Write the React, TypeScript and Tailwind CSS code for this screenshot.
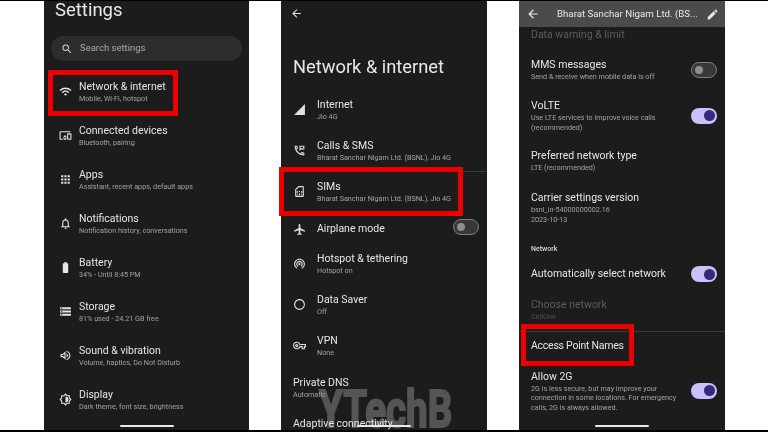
import type { ReactNode } from "react";
import {
  MdAirplanemodeActive,
  MdApps,
  MdArrowBack,
  MdBatteryStd,
  MdEdit,
  MdOutlineBrightness6,
  MdOutlineDevicesOther,
  MdOutlineNotifications,
  MdOutlinePermPhoneMsg,
  MdOutlineSimCard,
  MdOutlineVolumeUp,
  MdOutlineVpnKey,
  MdOutlineWifiTethering,
  MdPanoramaFishEye,
  MdSearch,
  MdSignalCellular4Bar,
  MdStorage,
  MdWifi,
} from "react-icons/md";

function Title({ children, dim, className = "" }: { children: ReactNode; dim?: boolean; className?: string }) {
  return (
    <div className={`text-[10.5px] leading-[14px] whitespace-nowrap ${dim ? "text-[#5c5c5c]" : "text-[#e6e6e6]"} ${className}`}>
      {children}
    </div>
  );
}

function Sub({ children, dim }: { children: ReactNode; dim?: boolean }) {
  return (
    <div className={`text-[7.2px] leading-[9.5px] whitespace-nowrap ${dim ? "text-[#555555]" : "text-[#a3a3a3]"}`}>{children}</div>
  );
}

function Toggle({ on }: { on?: boolean }) {
  if (on) {
    return (
      <div className="w-[26px] h-[16px] -my-px rounded-full bg-[#c9c1fb] flex items-center justify-end pr-[2px] shrink-0">
        <div className="size-[11px] rounded-full bg-[#35297c]" />
      </div>
    );
  }
  return (
    <div className="w-[26px] h-[16px] -my-px rounded-full border border-[#7d7d7d] bg-[#383838] flex items-center pl-[3px] shrink-0">
      <div className="size-[8px] rounded-full bg-[#8e8e8e]" />
    </div>
  );
}

function HomeBar() {
  return <div className="absolute z-20 bottom-[3px] left-1/2 -translate-x-1/2 w-[54px] h-[2px] bg-[#e8e8e8] rounded-full" />;
}

const settingsRows = [
  { icon: <MdWifi />, title: "Network & internet", sub: "Mobile, Wi-Fi, hotspot" },
  { icon: <MdOutlineDevicesOther />, title: "Connected devices", sub: "Bluetooth, pairing" },
  { icon: <MdApps />, title: "Apps", sub: "Assistant, recent apps, default apps" },
  { icon: <MdOutlineNotifications />, title: "Notifications", sub: "Notification history, conversations" },
  { icon: <MdBatteryStd />, title: "Battery", sub: "34% - Until 8:45 PM" },
  { icon: <MdStorage />, title: "Storage", sub: "81% used - 24.21 GB free" },
  { icon: <MdOutlineVolumeUp />, title: "Sound & vibration", sub: "Volume, haptics, Do Not Disturb" },
  { icon: <MdOutlineBrightness6 />, title: "Display", sub: "Dark theme, font size, brightness" },
];

function SettingsPanel() {
  return (
    <div className="relative w-[205px] bg-[#1c1c1c] shrink-0">
      <div className="pl-[11px] text-[18.5px] leading-[19px] text-[#e8e8e8]">Settings</div>
      <div className="mx-[7px] mt-[16px] h-[25px] rounded-full bg-[#2d2d2d] flex items-center text-[#a8a8a8]">
        <MdSearch className="ml-[10px] text-[12px] text-[#d0d0d0]" />
        <span className="ml-[7px] text-[9.5px]">Search settings</span>
      </div>
      <div className="mt-[19px]">
        {settingsRows.map((row) => (
          <div key={row.title} className="h-[44px] flex">
            <div className="w-[14px] ml-[14px] mr-[7px] h-[23.5px] flex items-center justify-center text-[13px] text-[#e6e6e6]">
              {row.icon}
            </div>
            <div>
              <Title>{row.title}</Title>
              <Sub>{row.sub}</Sub>
            </div>
          </div>
        ))}
      </div>
      <div className="absolute left-[4px] top-[69px] w-[130px] h-[46px] border-[5px] border-[#ec0000]" />
      <HomeBar />
    </div>
  );
}

const bsnl = "Bharat Sanchar Nigam Ltd. (BSNL), Jio 4G";

const networkRows = [
  { icon: <MdSignalCellular4Bar />, title: "Internet", sub: "Jio 4G", row: "h-[41px]" },
  { icon: <MdOutlinePermPhoneMsg />, title: "Calls & SMS", sub: bsnl, row: "h-[41px]" },
  { icon: <MdOutlineSimCard />, title: "SIMs", sub: bsnl, row: "h-[41px]" },
];

const networkRowsLower = [
  { icon: <MdOutlineWifiTethering />, title: "Hotspot & tethering", sub: "Hotspot on", row: "h-[41px]" },
  { icon: <MdPanoramaFishEye />, title: "Data Saver", sub: "Off", row: "h-[41px]" },
  { icon: <MdOutlineVpnKey />, title: "VPN", sub: "None", row: "h-[42px]" },
];

function NetworkRow({ icon, title, sub, row }: { icon: ReactNode; title: string; sub: string; row: string }) {
  return (
    <div className={`${row} flex`}>
      <div className="w-[14px] ml-[11px] mr-[11px] h-[23.5px] flex items-center justify-center text-[13px] text-[#e0e0e0]">
        {icon}
      </div>
      <div>
        <Title>{title}</Title>
        <Sub>{sub}</Sub>
      </div>
    </div>
  );
}

function NetworkPanel() {
  return (
    <div className="relative w-[206px] bg-[#1c1c1c] shrink-0">
      <div className="h-[24px] pl-[9px] flex items-center text-[13px] text-[#dddddd]">
        <MdArrowBack />
      </div>
      <div className="mt-[30px] pl-[12px] text-[18.3px] leading-[24px] text-[#e8e8e8]">Network &amp; internet</div>
      <div className="mt-[19px]">
        {networkRows.map((row) => (
          <NetworkRow key={row.title} {...row} />
        ))}
        <div className="h-[31px] pt-px flex">
          <div className="w-[14px] ml-[11px] mr-[11px] h-[14px] flex items-center justify-center text-[13px] text-[#e0e0e0]">
            <MdAirplanemodeActive />
          </div>
          <Title>Airplane mode</Title>
          <div className="absolute right-[8px] top-[219px]">
            <Toggle />
          </div>
        </div>
        {networkRowsLower.map((row) => (
          <NetworkRow key={row.title} {...row} />
        ))}
        <div className="relative z-10 h-[41px] pl-[12px]">
          <Title>Private DNS</Title>
          <Sub>Automatic</Sub>
        </div>
        <div className="relative z-10 pl-[12px]">
          <Title>Adaptive connectivity</Title>
        </div>
      </div>
      <div className="absolute left-0 right-0 top-[170px] h-px bg-[#3a3a3a]" />
      <div className="absolute left-[38px] top-[383px] text-[52px] leading-[52px] font-bold text-[#555555] [-webkit-text-stroke:2px_#555555] origin-left scale-x-[0.74] whitespace-nowrap">
        YTechB
      </div>
      <div className="absolute left-[-2px] top-[166px] w-[184px] h-[49px] border-[5px] border-[#ec0000]" />
      <HomeBar />
    </div>
  );
}

function SimRow({ className, children, on }: { className: string; children: ReactNode; on?: boolean }) {
  return (
    <div className={`${className} flex items-center pl-[12px] pr-[8px]`}>
      <div className="flex-1 min-w-0">{children}</div>
      {on !== undefined && <Toggle on={on} />}
    </div>
  );
}

function SimPanel() {
  return (
    <div className="relative w-[206px] bg-[#1c1c1c] shrink-0">
      <div className="h-[26px] bg-[#4b4b4b] flex items-center text-[#e8e8e8]">
        <MdArrowBack className="ml-[7px] text-[14px]" />
        <span className="ml-[17px] flex-1 text-[9.7px] whitespace-nowrap">Bharat Sanchar Nigam Ltd. (BS...</span>
        <MdEdit className="mr-[6px] text-[13px]" />
      </div>
      <SimRow className="mt-px h-[14px]">
        <Title dim>Data warning &amp; limit</Title>
      </SimRow>
      <SimRow className="mt-[16px]" on={false}>
        <Title>MMS messages</Title>
        <Sub>Send &amp; receive when mobile data is off</Sub>
      </SimRow>
      <SimRow className="mt-[17.5px]" on>
        <Title>VoLTE</Title>
        <Sub>
          Use LTE services to improve voice calls
          <br />
          (recommended)
        </Sub>
      </SimRow>
      <SimRow className="mt-[17px]">
        <Title>Preferred network type</Title>
        <Sub>LTE (recommended)</Sub>
      </SimRow>
      <SimRow className="mt-[18.5px]">
        <Title>Carrier settings version</Title>
        <Sub>
          bsnl_in-54000000002.16
          <br />
          2023-10-13
        </Sub>
      </SimRow>
      <div className="mt-[20.5px] pl-[12px] text-[7px] leading-[9px] font-medium text-[#d8d8d8]">Network</div>
      <SimRow className="mt-[13.5px]" on>
        <Title>Automatically select network</Title>
      </SimRow>
      <SimRow className="mt-[17px]">
        <Title dim>Choose network</Title>
        <Sub dim>CellOne</Sub>
      </SimRow>
      <div className="mt-[9.5px] h-px bg-[#3a3a3a]" />
      <SimRow className="mt-[6.5px]">
        <Title className="tracking-[-0.25px]">Access Point Names</Title>
      </SimRow>
      <SimRow className="mt-[17px]" on>
        <Title>Allow 2G</Title>
        <Sub>
          2G is less secure, but may improve your
          <br />
          connection in some locations. For emergency
          <br />
          calls, 2G is always allowed.
        </Sub>
      </SimRow>
      <div className="absolute left-[2px] top-[323px] w-[113px] h-[42px] border-[5px] border-[#ec0000]" />
      <HomeBar />
    </div>
  );
}

export default function App() {
  return (
    <div className="w-[768px] h-[432px] overflow-hidden bg-white border-t border-b-2 border-black flex gap-[32px] pl-[44px] font-['Roboto',sans-serif] blur-[0.4px]">
      <SettingsPanel />
      <NetworkPanel />
      <SimPanel />
    </div>
  );
}
